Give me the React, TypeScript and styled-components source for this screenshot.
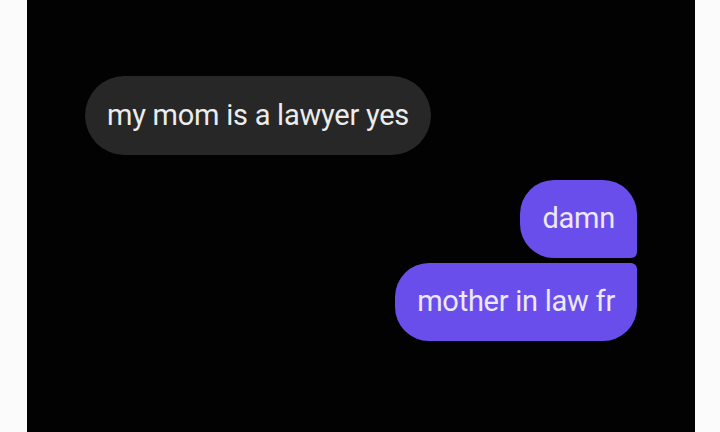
import React from 'react';
import styled, { createGlobalStyle } from 'styled-components';

const GlobalStyle = createGlobalStyle`
  html, body {
    margin: 0;
    padding: 0;
    background: #fbfbfb;
  }
  body {
    font-family: Roboto, "Liberation Sans", sans-serif;
  }
`;

const Page = styled.div`
  display: flex;
  justify-content: center;
  width: 720px;
  height: 432px;
  padding: 0 25px 0 27px;
  box-sizing: border-box;
`;

const Screen = styled.div`
  flex: 1;
  background: #020202;
  display: flex;
  flex-direction: column;
  padding: 76px 58px 0;
`;

const Thread = styled.div<{ $mine?: boolean }>`
  display: flex;
  flex-direction: column;
  align-items: ${(p) => (p.$mine ? 'flex-end' : 'flex-start')};
  gap: 5px;
  margin-top: ${(p) => (p.$mine ? '25px' : '0')};
`;

type Corner = 'first' | 'last' | 'single';

const Bubble = styled.div<{ $mine?: boolean; $pos: Corner }>`
  display: flex;
  align-items: center;
  height: ${(p) => (p.$pos === 'single' ? '79px' : '78px')};
  padding: 0 22px 2px;
  box-sizing: border-box;
  font-size: 29px;
  letter-spacing: -0.25px;
  color: ${(p) => (p.$mine ? '#eee8fb' : '#ececec')};
  background: ${(p) => (p.$mine ? '#6a4eec' : '#272727')};
  border-radius: ${(p) =>
    p.$pos === 'single'
      ? '40px'
      : p.$pos === 'first'
      ? '34px 34px 6px 34px'
      : '34px 6px 34px 34px'};
`;

export default function App() {
  return (
    <>
      <GlobalStyle />
      <Page>
        <Screen>
          <Thread>
            <Bubble $pos="single">my mom is a lawyer yes</Bubble>
          </Thread>
          <Thread $mine>
            <Bubble $mine $pos="first">damn</Bubble>
            <Bubble $mine $pos="last">mother in law fr</Bubble>
          </Thread>
        </Screen>
      </Page>
    </>
  );
}
